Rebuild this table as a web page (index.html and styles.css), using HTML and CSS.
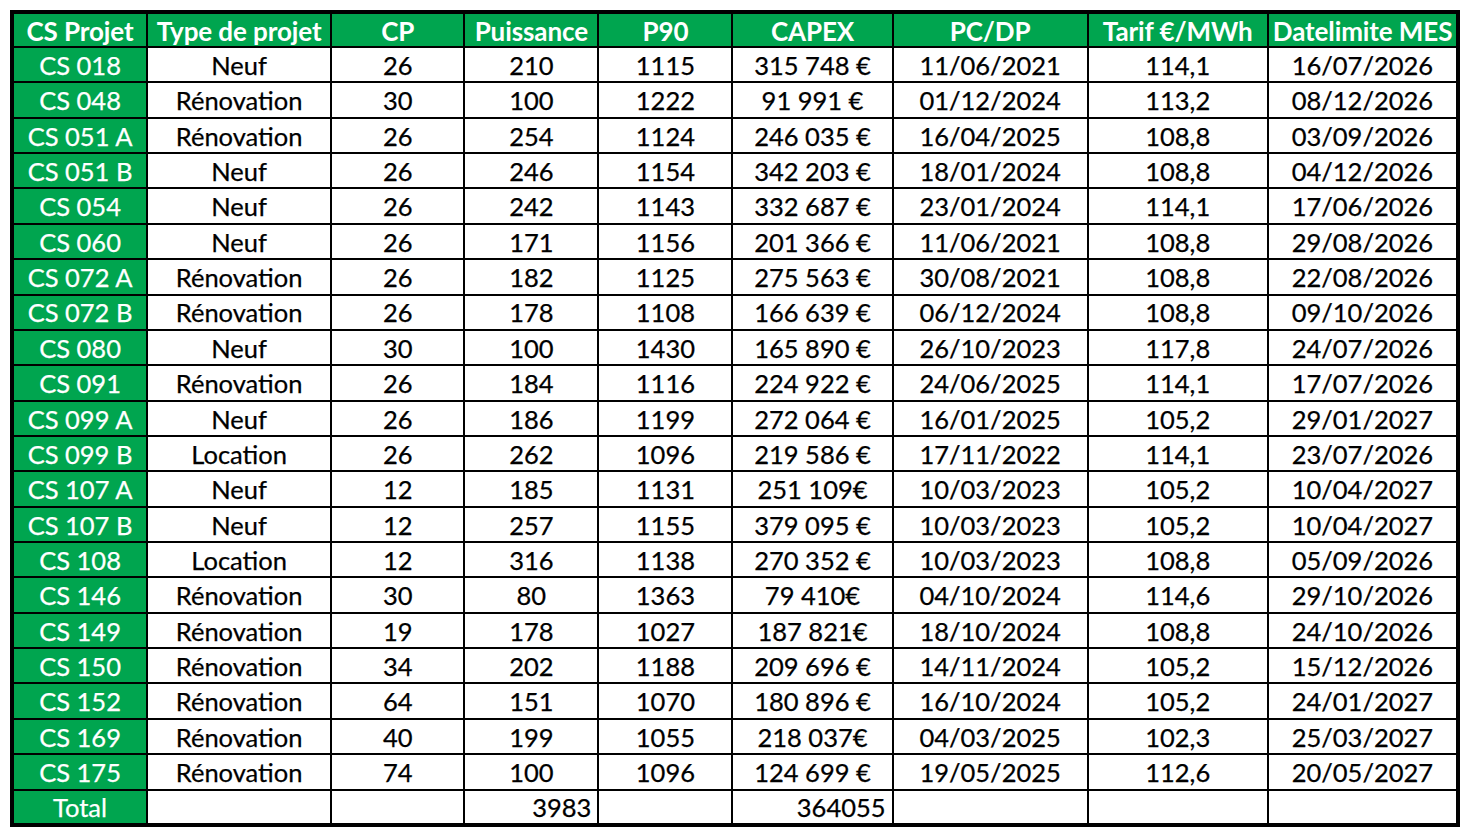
FILE: index.html
```html
<!DOCTYPE html>
<html lang="fr">
<head>
<meta charset="utf-8">
<title>Projets CS</title>
<link rel="stylesheet" href="styles.css">
</head>
<body>
<table class="grid">
  <colgroup>
    <col class="c1"><col class="c2"><col class="c3"><col class="c4"><col class="c5"><col class="c6"><col class="c7"><col class="c8"><col class="c9">
  </colgroup>
  <thead>
    <tr class="head">
      <th>CS Projet</th><th>Type de projet</th><th>CP</th><th>Puissance</th><th>P90</th><th>CAPEX</th><th>PC/DP</th><th>Tarif €/MWh</th><th>Datelimite MES</th>
    </tr>
  </thead>
  <tbody>
    <tr><th>CS 018</th><td>Neuf</td><td>26</td><td>210</td><td>1115</td><td>315 748 €</td><td>11/06/2021</td><td>114,1</td><td>16/07/2026</td></tr>
    <tr><th>CS 048</th><td>Rénovation</td><td>30</td><td>100</td><td>1222</td><td>91 991 €</td><td>01/12/2024</td><td>113,2</td><td>08/12/2026</td></tr>
    <tr><th>CS 051 A</th><td>Rénovation</td><td>26</td><td>254</td><td>1124</td><td>246 035 €</td><td>16/04/2025</td><td>108,8</td><td>03/09/2026</td></tr>
    <tr><th>CS 051 B</th><td>Neuf</td><td>26</td><td>246</td><td>1154</td><td>342 203 €</td><td>18/01/2024</td><td>108,8</td><td>04/12/2026</td></tr>
    <tr><th>CS 054</th><td>Neuf</td><td>26</td><td>242</td><td>1143</td><td>332 687 €</td><td>23/01/2024</td><td>114,1</td><td>17/06/2026</td></tr>
    <tr><th>CS 060</th><td>Neuf</td><td>26</td><td>171</td><td>1156</td><td>201 366 €</td><td>11/06/2021</td><td>108,8</td><td>29/08/2026</td></tr>
    <tr><th>CS 072 A</th><td>Rénovation</td><td>26</td><td>182</td><td>1125</td><td>275 563 €</td><td>30/08/2021</td><td>108,8</td><td>22/08/2026</td></tr>
    <tr><th>CS 072 B</th><td>Rénovation</td><td>26</td><td>178</td><td>1108</td><td>166 639 €</td><td>06/12/2024</td><td>108,8</td><td>09/10/2026</td></tr>
    <tr><th>CS 080</th><td>Neuf</td><td>30</td><td>100</td><td>1430</td><td>165 890 €</td><td>26/10/2023</td><td>117,8</td><td>24/07/2026</td></tr>
    <tr><th>CS 091</th><td>Rénovation</td><td>26</td><td>184</td><td>1116</td><td>224 922 €</td><td>24/06/2025</td><td>114,1</td><td>17/07/2026</td></tr>
    <tr><th>CS 099 A</th><td>Neuf</td><td>26</td><td>186</td><td>1199</td><td>272 064 €</td><td>16/01/2025</td><td>105,2</td><td>29/01/2027</td></tr>
    <tr><th>CS 099 B</th><td>Location</td><td>26</td><td>262</td><td>1096</td><td>219 586 €</td><td>17/11/2022</td><td>114,1</td><td>23/07/2026</td></tr>
    <tr><th>CS 107 A</th><td>Neuf</td><td>12</td><td>185</td><td>1131</td><td>251 109€</td><td>10/03/2023</td><td>105,2</td><td>10/04/2027</td></tr>
    <tr><th>CS 107 B</th><td>Neuf</td><td>12</td><td>257</td><td>1155</td><td>379 095 €</td><td>10/03/2023</td><td>105,2</td><td>10/04/2027</td></tr>
    <tr><th>CS 108</th><td>Location</td><td>12</td><td>316</td><td>1138</td><td>270 352 €</td><td>10/03/2023</td><td>108,8</td><td>05/09/2026</td></tr>
    <tr><th>CS 146</th><td>Rénovation</td><td>30</td><td>80</td><td>1363</td><td>79 410€</td><td>04/10/2024</td><td>114,6</td><td>29/10/2026</td></tr>
    <tr><th>CS 149</th><td>Rénovation</td><td>19</td><td>178</td><td>1027</td><td>187 821€</td><td>18/10/2024</td><td>108,8</td><td>24/10/2026</td></tr>
    <tr><th>CS 150</th><td>Rénovation</td><td>34</td><td>202</td><td>1188</td><td>209 696 €</td><td>14/11/2024</td><td>105,2</td><td>15/12/2026</td></tr>
    <tr><th>CS 152</th><td>Rénovation</td><td>64</td><td>151</td><td>1070</td><td>180 896 €</td><td>16/10/2024</td><td>105,2</td><td>24/01/2027</td></tr>
    <tr><th>CS 169</th><td>Rénovation</td><td>40</td><td>199</td><td>1055</td><td>218 037€</td><td>04/03/2025</td><td>102,3</td><td>25/03/2027</td></tr>
    <tr><th>CS 175</th><td>Rénovation</td><td>74</td><td>100</td><td>1096</td><td>124 699 €</td><td>19/05/2025</td><td>112,6</td><td>20/05/2027</td></tr>
    <tr class="total"><th>Total</th><td></td><td></td><td class="num">3983</td><td></td><td class="num">364055</td><td></td><td></td><td></td></tr>
  </tbody>
</table>
</body>
</html>
```

FILE: styles.css
```css
html, body {
  margin: 0;
  padding: 0;
  background: #ffffff;
}

body {
  font-family: Lato, "Open Sans", "Liberation Sans", sans-serif;
}

.grid {
  margin: 10px 0 0 10px;
  width: 1450px;
  height: 817px;
  border-collapse: collapse;
  border: 4px solid #000;
  table-layout: fixed;
  font-size: 25.5px;
  color: #000;
}

.c1 { width: 135px; }
.c2 { width: 184px; }
.c3 { width: 133px; }
.c4 { width: 134px; }
.c5 { width: 134px; }
.c6 { width: 160px; }
.c7 { width: 195px; }
.c8 { width: 180px; }
.c9 { width: 190px; }

.grid th,
.grid td {
  border: 2px solid #000;
  padding: 2px 4px 0;
  text-align: center;
  vertical-align: middle;
  white-space: nowrap;
  line-height: 1;
  font-weight: 400;
  overflow: hidden;
  -webkit-text-stroke: 0.25px currentColor;
}

.grid tr {
  height: 35px;
}

.grid th {
  background: #00a54f;
  color: #ffffff;
}

.head th {
  font-weight: 700;
  font-size: 26px;
  letter-spacing: -0.1px;
  -webkit-text-stroke: 0;
}

.grid td {
  background: #ffffff;
}

.grid td.num {
  text-align: right;
  padding-right: 6px;
}
```
